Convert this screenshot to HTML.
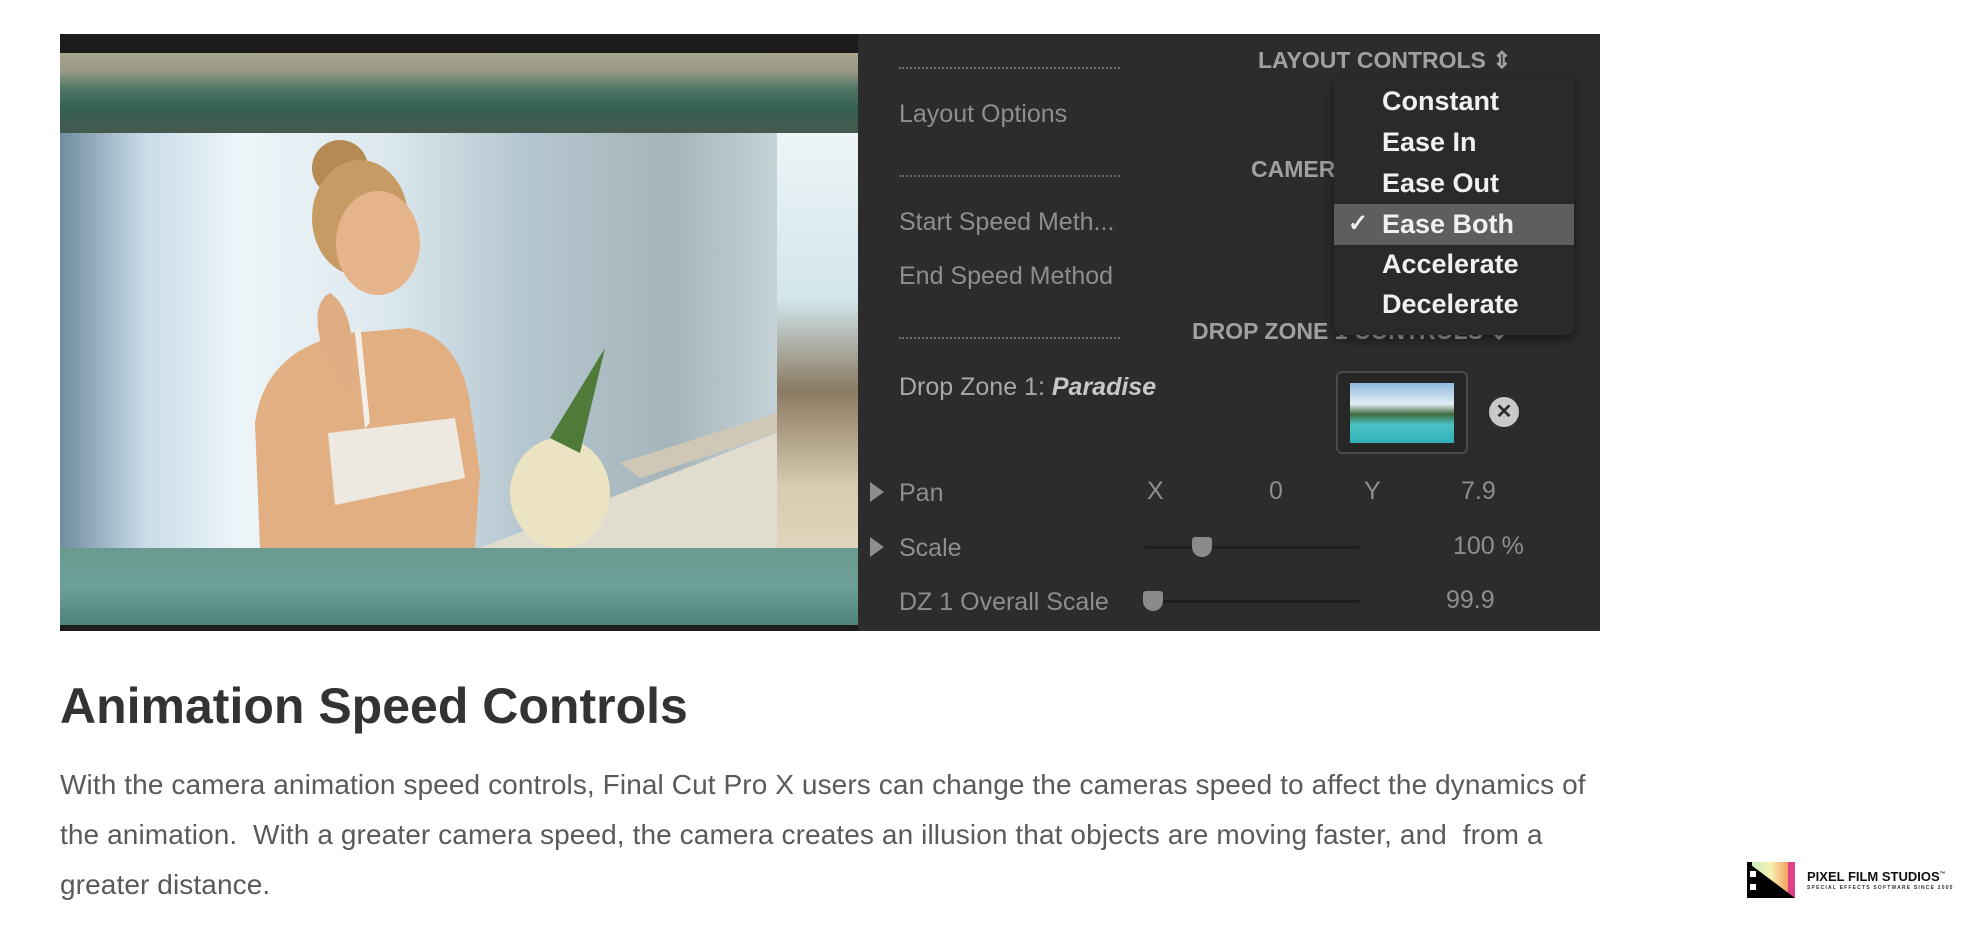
<!DOCTYPE html>
<html><head><meta charset="utf-8"><style>
*{margin:0;padding:0;box-sizing:border-box}
body{width:1988px;height:946px;background:#fff;position:relative;overflow:hidden;font-family:"Liberation Sans",Arial,sans-serif}
.a{position:absolute}
.pl{color:#8e8e8e;font-size:25px;white-space:nowrap;line-height:30px}
.hd{color:#a0a0a0;font-size:23px;white-space:nowrap;font-weight:bold;line-height:30px}
.dots{border-top:2px dotted #6a6a6a;width:221px;height:0}
.mi{color:#f0f0f0;font-size:27px;font-weight:bold;white-space:nowrap;line-height:32px}
</style></head><body>
<!-- photo area -->
<div class="a" style="left:60px;top:34px;width:800px;height:597px;background:#1c1c1c"></div>
<div class="a" style="left:60px;top:53px;width:798px;height:80px;background:linear-gradient(180deg,#a8a48e 0%,#9a9a86 22%,#4f7565 45%,#33604f 70%,#46594f 100%)"></div>
<div class="a" style="left:60px;top:133px;width:717px;height:415px;background:linear-gradient(90deg,#6f8c9f 0%,#c9dde8 12%,#edf5f8 25%,#dde9ef 45%,#b4c6cf 65%,#a6b5ba 85%,#c5d2d6 100%)"></div>
<div class="a" style="left:777px;top:133px;width:81px;height:415px;background:linear-gradient(180deg,#eef4f5 0%,#d2e6ec 40%,#8a7a62 62%,#d8cbb0 85%,#e0d4bc 100%)"></div>
<svg class="a" style="left:60px;top:133px" width="717" height="415" viewBox="0 0 717 415">
<path d="M420 415 L717 300 L717 415 Z" fill="#e0dccf"/>
<path d="M560 330 L717 280 L717 300 L580 345 Z" fill="#cfc8b6"/>
<circle cx="280" cy="35" r="28" fill="#b58a55"/>
<ellipse cx="300" cy="85" rx="48" ry="58" fill="#c89b64"/>
<ellipse cx="318" cy="110" rx="42" ry="52" fill="#e6b48a"/>
<path d="M200 415 L195 290 Q205 215 290 200 L350 195 Q400 205 410 270 L420 340 L415 415 Z" fill="#e2af83"/>
<path d="M268 300 L395 285 L405 345 L275 372 Z" fill="#ede9e1"/>
<path d="M300 190 L310 290 L305 295 L295 200 Z" fill="#f2efe8"/>
<path d="M262 215 Q250 170 270 160 Q300 180 290 260 Z" fill="#e0ad82"/>
<ellipse cx="500" cy="360" rx="50" ry="55" fill="#ece3c2"/>
<path d="M490 305 L545 215 L520 320 Z" fill="#4f7a3a"/>
</svg>
<div class="a" style="left:60px;top:548px;width:798px;height:77px;background:linear-gradient(180deg,#6a9a90,#6da097 50%,#4f8279)"></div>
<!-- panel -->
<div class="a" style="left:858px;top:34px;width:742px;height:597px;background:#2c2c2c"></div>
<div class="a dots" style="left:899px;top:67px"></div>
<div class="a dots" style="left:899px;top:175px"></div>
<div class="a dots" style="left:899px;top:337px"></div>
<div class="a hd" style="left:1258px;top:45px">LAYOUT CONTROLS ⇕</div>
<div class="a pl" style="left:899px;top:99px">Layout Options</div>
<div class="a hd" style="left:1251px;top:154px">CAMERA CONTROLS ⇕</div>
<div class="a pl" style="left:899px;top:207px">Start Speed Meth...</div>
<div class="a pl" style="left:899px;top:261px">End Speed Method</div>
<div class="a hd" style="left:1192px;top:316px">DROP ZONE 1 CONTROLS ⇕</div>
<div class="a pl" style="left:899px;top:372px;color:#a8a8a8">Drop Zone 1: <i style="font-weight:bold;color:#c8c8c8">Paradise</i></div>
<div class="a" style="left:1336px;top:371px;width:132px;height:83px;border:2px solid #4a4a4a;border-radius:6px;background:#262626"></div>
<div class="a" style="left:1350px;top:383px;width:104px;height:60px;background:linear-gradient(180deg,#8fb8e0 0%,#e4eef5 35%,#3f6c3f 52%,#4cc3c8 70%,#2fb0b5 100%)"></div>
<div class="a" style="left:1489px;top:397px;width:30px;height:30px;border-radius:50%;background:#c8c8c8;color:#2c2c2c;font-size:20px;font-weight:bold;text-align:center;line-height:30px">✕</div>
<div class="a" style="left:870px;top:482px;width:0;height:0;border-left:14px solid #8e8e8e;border-top:10px solid transparent;border-bottom:10px solid transparent"></div>
<div class="a pl" style="left:899px;top:478px">Pan</div>
<div class="a pl" style="left:1147px;top:476px">X</div>
<div class="a pl" style="left:1269px;top:476px">0</div>
<div class="a pl" style="left:1364px;top:476px">Y</div>
<div class="a pl" style="left:1461px;top:476px">7.9</div>
<div class="a" style="left:870px;top:537px;width:0;height:0;border-left:14px solid #8e8e8e;border-top:10px solid transparent;border-bottom:10px solid transparent"></div>
<div class="a pl" style="left:899px;top:533px">Scale</div>
<div class="a" style="left:1145px;top:546px;width:214px;height:3px;background:#1e1e1e"></div>
<div class="a" style="left:1192px;top:537px;width:20px;height:20px;background:#8a8a8a;border-radius:3px 3px 10px 10px"></div>
<div class="a pl" style="left:1453px;top:531px">100 %</div>
<div class="a pl" style="left:899px;top:587px">DZ 1 Overall Scale</div>
<div class="a" style="left:1145px;top:600px;width:214px;height:3px;background:#1e1e1e"></div>
<div class="a" style="left:1143px;top:591px;width:20px;height:20px;background:#8a8a8a;border-radius:3px 3px 10px 10px"></div>
<div class="a pl" style="left:1446px;top:585px">99.9</div>
<!-- dropdown -->
<div class="a" style="left:1334px;top:76px;width:240px;height:259px;background:#2a2a2a;border-radius:8px;box-shadow:0 4px 12px rgba(0,0,0,.5)"></div>
<div class="a" style="left:1334px;top:204px;width:240px;height:41px;background:#5e5e5e"></div>
<div class="a mi" style="left:1382px;top:85px">Constant</div>
<div class="a mi" style="left:1382px;top:126px">Ease In</div>
<div class="a mi" style="left:1382px;top:167px">Ease Out</div>
<div class="a mi" style="left:1348px;top:208px;font-size:24px">✓</div>
<div class="a mi" style="left:1382px;top:208px">Ease Both</div>
<div class="a mi" style="left:1382px;top:248px">Accelerate</div>
<div class="a mi" style="left:1382px;top:288px">Decelerate</div>
<!-- text -->
<div class="a" style="left:60px;top:677px;font-size:50px;font-weight:bold;color:#333;white-space:nowrap">Animation Speed Controls</div>
<div class="a" style="left:60px;top:760px;width:1560px;font-size:28px;line-height:50px;color:#5a5a5a;letter-spacing:0.1px">With the camera animation speed controls, Final Cut Pro X users can change the cameras speed to affect the dynamics of the animation.&nbsp; With a greater camera speed, the camera creates an illusion that objects are moving faster, and&nbsp; from a greater distance.</div>
<!-- logo -->
<svg class="a" style="left:1747px;top:862px" width="48" height="36" viewBox="0 0 48 36">
<defs><linearGradient id="g" x1="0" x2="1"><stop offset="0" stop-color="#b8f0c0"/><stop offset=".5" stop-color="#f7f0b0"/><stop offset="1" stop-color="#f08040"/></linearGradient></defs>
<rect x="0" y="0" width="48" height="36" fill="url(#g)"/>
<rect x="41" y="0" width="7" height="36" fill="#e0408a"/>
<path d="M0 0 L48 36 L0 36 Z" fill="#000"/>
<rect x="0" y="0" width="5" height="36" fill="#000"/>
<rect x="3" y="9" width="6" height="6" fill="#fff"/><rect x="3" y="22" width="6" height="6" fill="#fff"/>
</svg>
<div class="a" style="left:1807px;top:869px;font-size:13px;font-weight:bold;color:#111;white-space:nowrap">PIXEL FILM STUDIOS<sup style="font-size:6px">™</sup></div>
<div class="a" style="left:1807px;top:885px;font-size:5px;font-weight:bold;color:#333;letter-spacing:1.2px;white-space:nowrap">SPECIAL EFFECTS SOFTWARE SINCE 2005</div>
</body></html>
